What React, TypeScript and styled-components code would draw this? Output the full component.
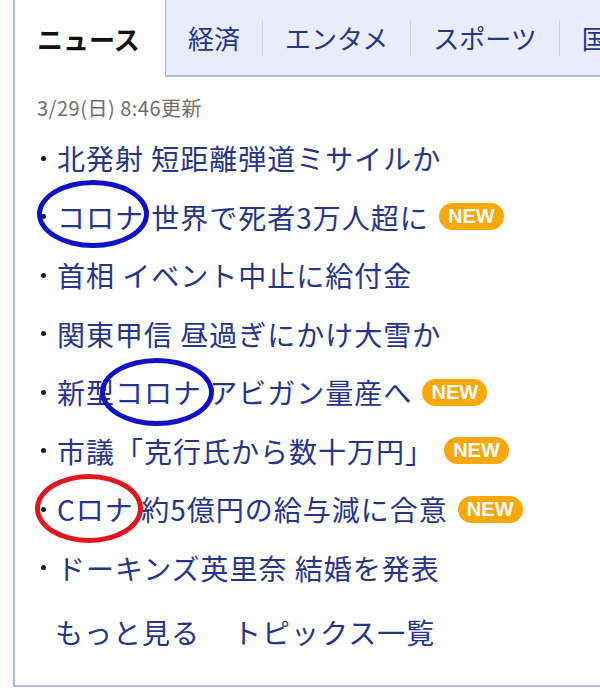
import React from 'react';
import styled, { createGlobalStyle } from 'styled-components';

const GlobalStyle = createGlobalStyle`
  body {
    margin: 0;
    background: #fff;
    font-family: "Noto Sans CJK JP", "Noto Sans", sans-serif;
  }
`;

const Panel = styled.section`
  box-sizing: border-box;
  margin-left: 13px;
  height: 687px;
  border-left: 2px solid #b0bde2;
  border-bottom: 2px solid #b0bde2;
  overflow: hidden;
`;

const TabBar = styled.nav`
  display: flex;
  height: 77px;
`;

const ActiveTab = styled.div`
  flex: none;
  width: 150px;
  padding-left: 22px;
  box-sizing: border-box;
  display: flex;
  align-items: center;
  font-size: 26px;
  font-weight: 700;
  color: #111;
  background: #fff;
`;

const TabRest = styled.ul`
  flex: 1;
  display: flex;
  align-items: center;
  margin: 0;
  padding: 0;
  list-style: none;
  background: #e9edfb;
  border-left: 1px solid #aebbe0;
  border-bottom: 2px solid #aebbe0;
  white-space: nowrap;
  overflow: hidden;
`;

const Tab = styled.li`
  flex: none;
  display: flex;
  align-items: center;
  padding: 0 22px;
  font-size: 26px;
  color: #26348a;
`;

const Divider = styled.li`
  flex: none;
  width: 1px;
  height: 36px;
  background: #c9d1ea;
`;

const Body = styled.div`
  padding: 18px 0 0 22px;
`;

const Updated = styled.div`
  font-size: 20px;
  line-height: 26px;
  letter-spacing: 0.5px;
  color: #6e6e6e;
`;

const TopicList = styled.ul`
  margin: 8px 0 0;
  padding: 0;
  list-style: none;
`;

const Topic = styled.li`
  display: flex;
  align-items: center;
  height: 58.5px;
  font-size: 28px;
  letter-spacing: 1px;
  color: #26348a;
  white-space: nowrap;

  &::before {
    content: '';
    flex: none;
    width: 5px;
    height: 5px;
    margin: 0 11px 0 4px;
    border-radius: 50%;
    background: #1a1a1a;
  }
`;

const Marked = styled.span<{ $color: string; $l: number; $r: number; $t: number; $b: number }>`
  position: relative;
  display: inline-block;
  line-height: 1;

  &::after {
    content: '';
    position: absolute;
    left: ${p => -p.$l}px;
    right: ${p => -p.$r}px;
    top: ${p => -p.$t}px;
    bottom: ${p => -p.$b}px;
    border: 5.5px solid ${p => p.$color};
    border-radius: 50%;
  }
`;

const NewBadge = styled.span`
  display: inline-flex;
  align-items: center;
  justify-content: center;
  width: 65px;
  height: 27px;
  margin-left: 10px;
  border-radius: 14px;
  background: #f7a80c;
  color: #fff;
  font-family: "Liberation Sans", Arial, sans-serif;
  font-size: 20px;
  font-weight: 700;
  letter-spacing: 0;
`;

const Footer = styled.div`
  display: flex;
  gap: 33px;
  margin-top: 6px;
  padding-left: 18px;
  font-size: 28px;
  letter-spacing: 1px;
  line-height: 58px;
  color: #26348a;
`;

const BLUE = '#1010c8';
const RED = '#e3141e';

const App = () => {
  return (
    <>
      <GlobalStyle />
      <Panel>
        <TabBar>
          <ActiveTab>ニュース</ActiveTab>
          <TabRest>
            <Tab>経済</Tab>
            <Divider />
            <Tab>エンタメ</Tab>
            <Divider />
            <Tab>スポーツ</Tab>
            <Divider />
            <Tab>国内</Tab>
          </TabRest>
        </TabBar>
        <Body>
          <Updated>3/29(日) 8:46更新</Updated>
          <TopicList>
            <Topic>北発射 短距離弾道ミサイルか</Topic>
            <Topic>
              <Marked $color={BLUE} $l={20} $r={5} $t={23} $b={17}>コロナ</Marked>
              &nbsp;世界で死者3万人超に<NewBadge>NEW</NewBadge>
            </Topic>
            <Topic>首相 イベント中止に給付金</Topic>
            <Topic>関東甲信 昼過ぎにかけ大雪か</Topic>
            <Topic>
              新型<Marked $color={BLUE} $l={15} $r={12} $t={20} $b={20}>コロナ</Marked>
              &nbsp;アビガン量産へ<NewBadge>NEW</NewBadge>
            </Topic>
            <Topic>市議「克行氏から数十万円」<NewBadge>NEW</NewBadge></Topic>
            <Topic>
              <Marked $color={RED} $l={22} $r={9} $t={21} $b={20}>Cロナ</Marked>
              &nbsp;約5億円の給与減に合意<NewBadge>NEW</NewBadge>
            </Topic>
            <Topic>ドーキンズ英里奈 結婚を発表</Topic>
          </TopicList>
          <Footer>
            <span>もっと見る</span>
            <span>トピックス一覧</span>
          </Footer>
        </Body>
      </Panel>
    </>
  );
};

export default App;
